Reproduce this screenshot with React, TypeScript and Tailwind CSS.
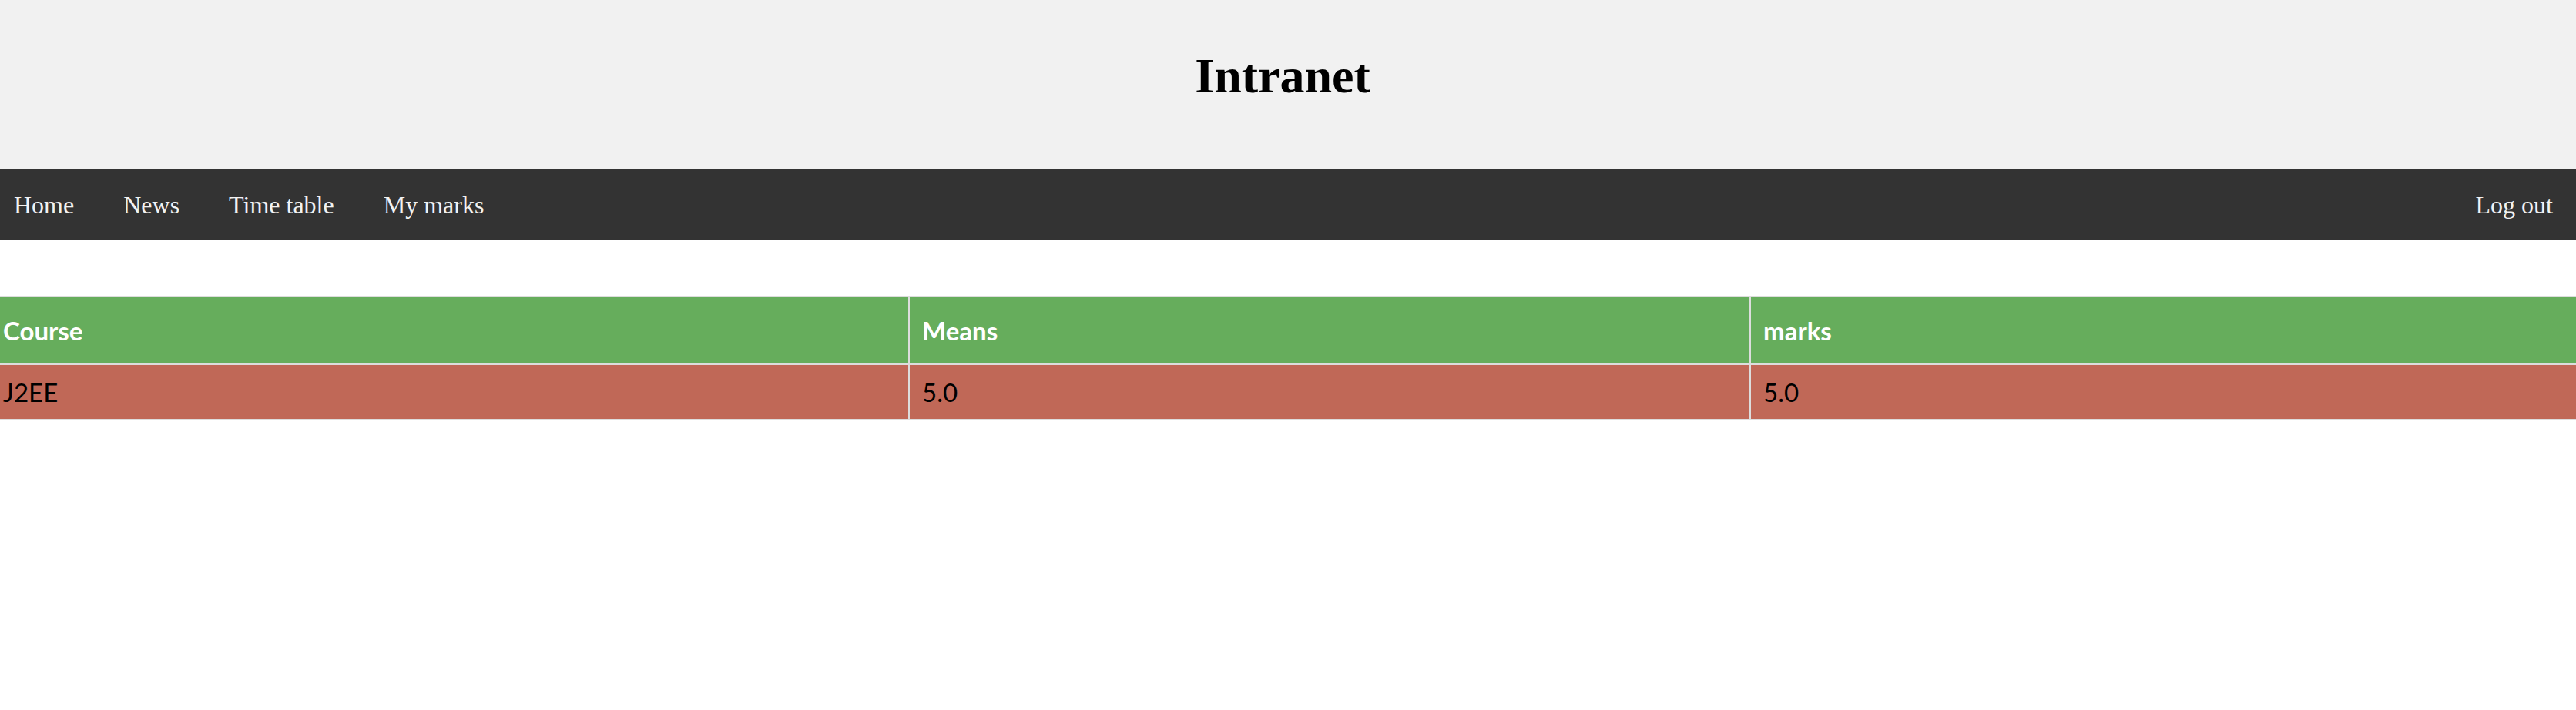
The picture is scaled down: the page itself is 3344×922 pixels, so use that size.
const links = ['Home', 'News', 'Time table', 'My marks'];

export default function App() {
  return (
    <div className="min-h-screen bg-white">
      {/* Header */}
      <div className="h-[220px] bg-[#f1f1f1] pt-[63px] pr-[14px]">
        <h1 className="text-center font-['Liberation_Serif',serif] text-[64px] font-bold leading-[71px] text-black">
          Intranet
        </h1>
      </div>

      {/* Nav */}
      <nav className="flex h-[92px] items-center bg-[#333333] font-['Liberation_Serif',serif] text-[32px] leading-[36px] text-[#f2f2f2]">
        {links.map((l, i) => (
          <a key={l} href="#" className={i === 0 ? 'pl-[18px] pr-8' : 'px-8'}>
            {l}
          </a>
        ))}
        <a href="#" className="ml-auto pl-8 pr-[30px]">
          Log out
        </a>
      </nav>

      {/* Marks table */}
      <table className="mt-[72px] w-full table-fixed border-collapse font-['Lato',sans-serif] text-[33px] leading-[38px]">
        <colgroup>
          <col className="w-[1180px]" />
          <col className="w-[1092px]" />
          <col />
        </colgroup>
        <thead>
          <tr className="bg-[#66ad5c] text-left text-white">
            <th className="border-2 border-l-0 border-[#dddddd] py-6 pl-[4px] font-bold">Course</th>
            <th className="border-2 border-[#dddddd] px-4 py-6 font-bold">Means</th>
            <th className="border-2 border-r-0 border-[#dddddd] px-4 py-6 font-bold">marks</th>
          </tr>
        </thead>
        <tbody>
          <tr className="bg-[#c06857] text-black">
            <td className="border-2 border-l-0 border-[#dddddd] py-4 pl-[4px]">J2EE</td>
            <td className="border-2 border-[#dddddd] px-4 py-4">5.0</td>
            <td className="border-2 border-r-0 border-[#dddddd] px-4 py-4">5.0</td>
          </tr>
        </tbody>
      </table>
    </div>
  );
}
